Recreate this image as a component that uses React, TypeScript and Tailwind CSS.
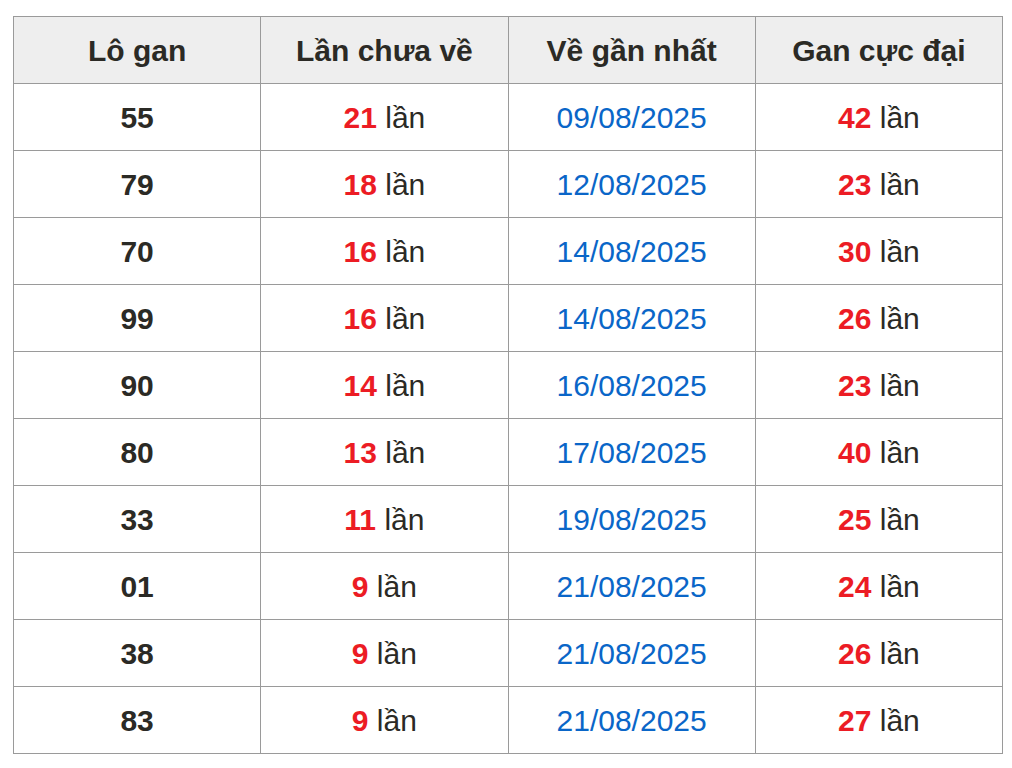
const rows = [
  { so: '55', chua: 21, ngay: '09/08/2025', max: 42 },
  { so: '79', chua: 18, ngay: '12/08/2025', max: 23 },
  { so: '70', chua: 16, ngay: '14/08/2025', max: 30 },
  { so: '99', chua: 16, ngay: '14/08/2025', max: 26 },
  { so: '90', chua: 14, ngay: '16/08/2025', max: 23 },
  { so: '80', chua: 13, ngay: '17/08/2025', max: 40 },
  { so: '33', chua: 11, ngay: '19/08/2025', max: 25 },
  { so: '01', chua: 9, ngay: '21/08/2025', max: 24 },
  { so: '38', chua: 9, ngay: '21/08/2025', max: 26 },
  { so: '83', chua: 9, ngay: '21/08/2025', max: 27 },
];

const headers = ['Lô gan', 'Lần chưa về', 'Về gần nhất', 'Gan cực đại'];

export default function App() {
  return (
    <div className="bg-white min-h-screen pt-[16px] px-[13px]" style={{ fontFamily: '"Liberation Sans", Arial, sans-serif' }}>
      <table className="w-[990px] table-fixed border-collapse text-[30px] text-[#2b2a25]">
        <thead>
          <tr className="bg-[#eeeeee]">
            {headers.map(h => (
              <th key={h} className="h-[67px] border border-[#9a9a9a] pt-[1px] text-center font-bold">
                {h}
              </th>
            ))}
          </tr>
        </thead>
        <tbody>
          {rows.map(r => (
            <tr key={r.so}>
              <td className="h-[67px] border border-[#9a9a9a] pt-[1px] text-center font-bold">{r.so}</td>
              <td className="h-[67px] border border-[#9a9a9a] pt-[1px] text-center">
                <span className="font-bold text-[#ec1c24]">{r.chua}</span> lần
              </td>
              <td className="h-[67px] border border-[#9a9a9a] pt-[1px] text-center text-[#0a66c8]">{r.ngay}</td>
              <td className="h-[67px] border border-[#9a9a9a] pt-[1px] text-center">
                <span className="font-bold text-[#ec1c24]">{r.max}</span> lần
              </td>
            </tr>
          ))}
        </tbody>
      </table>
    </div>
  );
}
